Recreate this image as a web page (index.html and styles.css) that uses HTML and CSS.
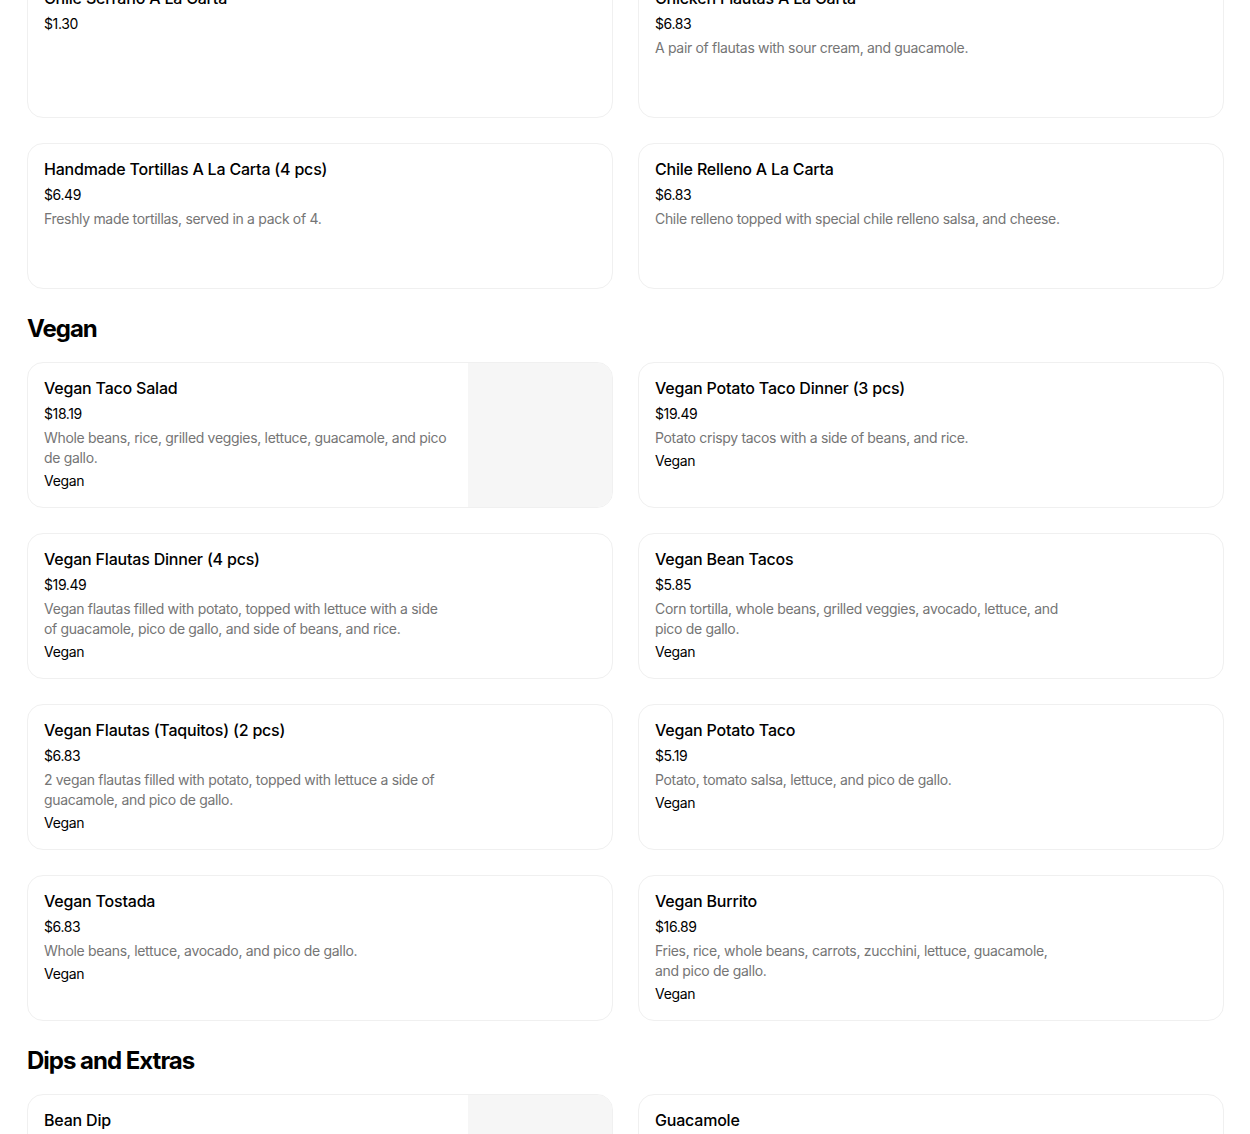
FILE: index.html
```html
<!DOCTYPE html>
<html>
<head>
<meta charset="utf-8">
<link rel="stylesheet" href="styles.css">
</head>
<body>
<main class="menu">
  <section class="section">
    <div class="grid">
      <div class="card"><div class="info"><div class="title">Chile Serrano A La Carta</div><div class="price">$1.30</div></div></div>
      <div class="card"><div class="info"><div class="title">Chicken Flautas A La Carta</div><div class="price">$6.83</div><div class="desc">A pair of flautas with sour cream, and guacamole.</div></div></div>
      <div class="card"><div class="info"><div class="title">Handmade Tortillas A La Carta (4 pcs)</div><div class="price">$6.49</div><div class="desc">Freshly made tortillas, served in a pack of 4.</div></div></div>
      <div class="card"><div class="info"><div class="title">Chile Relleno A La Carta</div><div class="price">$6.83</div><div class="desc">Chile relleno topped with special chile relleno salsa, and cheese.</div></div></div>
    </div>
  </section>
  <section class="section">
    <h2 class="heading">Vegan</h2>
    <div class="grid">
      <div class="card"><div class="info"><div class="title">Vegan Taco Salad</div><div class="price">$18.19</div><div class="desc">Whole beans, rice, grilled veggies, lettuce, guacamole, and pico de gallo.</div><div class="tag">Vegan</div></div><div class="thumb"></div></div>
      <div class="card"><div class="info"><div class="title">Vegan Potato Taco Dinner (3 pcs)</div><div class="price">$19.49</div><div class="desc">Potato crispy tacos with a side of beans, and rice.</div><div class="tag">Vegan</div></div></div>
      <div class="card"><div class="info"><div class="title">Vegan Flautas Dinner (4 pcs)</div><div class="price">$19.49</div><div class="desc">Vegan flautas filled with potato, topped with lettuce with a side of guacamole, pico de gallo, and side of beans, and rice.</div><div class="tag">Vegan</div></div></div>
      <div class="card"><div class="info"><div class="title">Vegan Bean Tacos</div><div class="price">$5.85</div><div class="desc">Corn tortilla, whole beans, grilled veggies, avocado, lettuce, and pico de gallo.</div><div class="tag">Vegan</div></div></div>
      <div class="card"><div class="info"><div class="title">Vegan Flautas (Taquitos) (2 pcs)</div><div class="price">$6.83</div><div class="desc">2 vegan flautas filled with potato, topped with lettuce a side of guacamole, and pico de gallo.</div><div class="tag">Vegan</div></div></div>
      <div class="card"><div class="info"><div class="title">Vegan Potato Taco</div><div class="price">$5.19</div><div class="desc">Potato, tomato salsa, lettuce, and pico de gallo.</div><div class="tag">Vegan</div></div></div>
      <div class="card"><div class="info"><div class="title">Vegan Tostada</div><div class="price">$6.83</div><div class="desc">Whole beans, lettuce, avocado, and pico de gallo.</div><div class="tag">Vegan</div></div></div>
      <div class="card"><div class="info"><div class="title">Vegan Burrito</div><div class="price">$16.89</div><div class="desc">Fries, rice, whole beans, carrots, zucchini, lettuce, guacamole, and pico de gallo.</div><div class="tag">Vegan</div></div></div>
    </div>
  </section>
  <section class="section">
    <h2 class="heading">Dips and Extras</h2>
    <div class="grid">
      <div class="card"><div class="info"><div class="title">Bean Dip</div><div class="price">$4.55</div></div><div class="thumb"></div></div>
      <div class="card"><div class="info"><div class="title">Guacamole</div><div class="price">$5.20</div></div></div>
    </div>
  </section>
</main>
</body>
</html>
```
FILE: styles.css
```css
html, body {
  margin: 0;
  padding: 0;
  background: #ffffff;
}
body {
  font-family: "Inter", "Liberation Sans", sans-serif;
  color: #000000;
  overflow: hidden;
}
.menu {
  margin-top: -28px;
  padding: 0 26px 0 27px;
}
.section {
  margin-bottom: 24px;
}
.heading {
  margin: 0 0 17px;
  font-size: 24px;
  line-height: 32px;
  font-weight: 700;
  letter-spacing: -1px;
}
.grid {
  display: grid;
  grid-template-columns: 1fr 1fr;
  column-gap: 25px;
  row-gap: 25px;
}
.card {
  display: flex;
  height: 146px;
  box-sizing: border-box;
  border: 1px solid #f0f0f0;
  border-radius: 16px;
  overflow: hidden;
  background: #fff;
}
.info {
  flex: 1;
  padding: 15px 16px 16px;
  min-width: 0;
}
.info > * {
  max-width: 407px;
}
.title {
  font-size: 16px;
  line-height: 20px;
  font-weight: 500;
  letter-spacing: -0.2px;
  margin-bottom: 6px;
}
.price {
  font-size: 14px;
  line-height: 20px;
  letter-spacing: -0.4px;
  margin-bottom: 4px;
}
.desc {
  font-size: 14px;
  line-height: 20px;
  color: #757575;
  letter-spacing: -0.32px;
  margin-bottom: 3px;
}
.tag {
  font-size: 14px;
  line-height: 20px;
  letter-spacing: -0.3px;
}
.thumb {
  width: 144px;
  flex: none;
  background: #f6f6f6;
}
```
